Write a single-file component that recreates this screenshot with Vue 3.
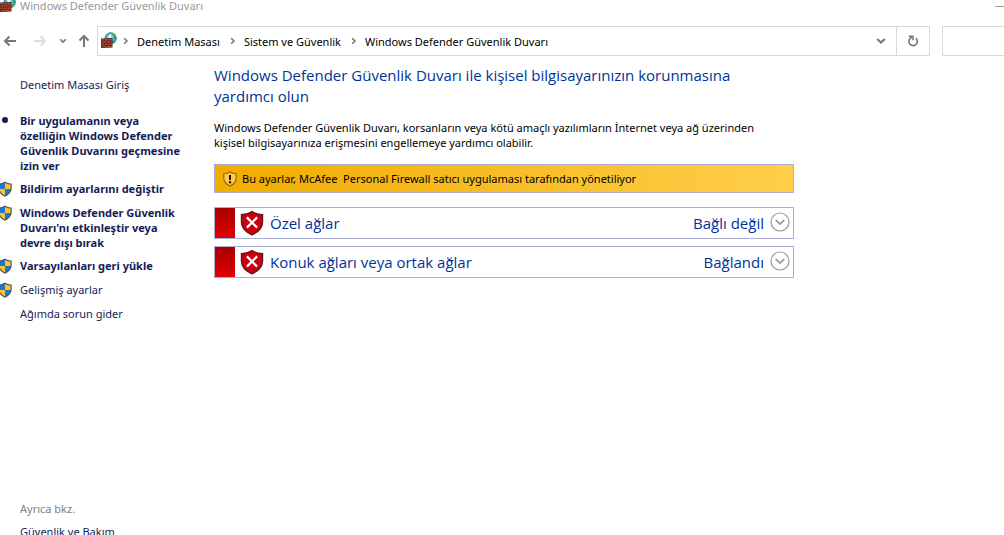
<script setup>
const tasks = [
  { text: 'Bir uygulamanın veya\nözelliğin Windows Defender\nGüvenlik Duvarını geçmesine\nizin ver', bold: true, mark: 'dot' },
  { text: 'Bildirim ayarlarını değiştir', bold: true, mark: 'shield' },
  { text: "Windows Defender Güvenlik\nDuvarı'nı etkinleştir veya\ndevre dışı bırak", bold: true, mark: 'shield' },
  { text: 'Varsayılanları geri yükle', bold: true, mark: 'shield' },
  { text: 'Gelişmiş ayarlar', bold: false, mark: 'shield' },
  { text: 'Ağımda sorun gider', bold: false, mark: '' },
]
const crumbs = ['Denetim Masası', 'Sistem ve Güvenlik', 'Windows Defender Güvenlik Duvarı']
const networks = [
  { name: 'Özel ağlar', state: 'Bağlı değil' },
  { name: 'Konuk ağları veya ortak ağlar', state: 'Bağlandı' },
]
</script>

<template>
  <svg class="defs" width="0" height="0" aria-hidden="true">
    <defs>
      <symbol id="firewall" viewBox="0 0 16 16">
        <circle cx="9.7" cy="6.2" r="6" fill="#2a6fe0" />
        <circle cx="9.2" cy="5.4" r="3.800" fill="#7cc4fa" />
        <path d="M11.200.9c1.600.4 2.700 1.200 3.500 2.500l-.5 1.800-1.800-.2-1.400-1.900zM12.500 7l2.900-.2c-.1 1.900-.9 3.300-2.200 4.300l-1.500-1.700z" fill="#3fbf35" />
        <path d="M4.500 4.300C5.300 2.300 6.800.9 8.700.6L8.300 2.600 6.200 4.700z" fill="#4dc050" />
        <path d="M8.600 2.300c1 0 1.800.6 2 1.600l-.7 2.200-2 .2-.7-1.700z" fill="#e3f7ff" />
        <path d="M0 6.500 11.500 6v9.500L0 16z" fill="#5d2119" />
        <g fill="#ac4a38">
          <path d="M.5 7H3v1.600H.5zM3.800 7h3v1.600h-3zM7.600 7H11v1.600H7.600zM.5 9.300h1v1.500h-1zM2.200 9.300h3v1.500h-3zM6 9.300h3v1.500H6zM9.700 9.300H11v1.500H9.700zM.5 11.500H3V13H.5zM3.800 11.500h3V13h-3zM7.600 11.500H11V13H7.600zM.5 13.700h1v1.600h-1zM2.200 13.700h3v1.600h-3zM6 13.700h3v1.500H6zM9.700 13.700H11V15H9.700z" />
        </g>
      </symbol>
      <symbol id="uac" viewBox="0 0 16 16">
        <path d="M8 .4C5.800 1.900 3.600 2.400 1.300 2.400V7c0 4 2.700 6.900 6.700 8.700 4-1.800 6.700-4.700 6.700-8.700V2.400C12.400 2.400 10.200 1.900 8 .4z" fill="#4a4f55" />
        <path d="M8 1.700C6.300 2.800 4.400 3.400 2.400 3.500V8H8z" fill="#1e78d0" />
        <path d="M8 1.700c1.700 1.100 3.600 1.700 5.600 1.800V8H8z" fill="#fdc22e" />
        <path d="M2.400 8H8v6.500C5 13 2.700 10.900 2.400 8z" fill="#fdc22e" />
        <path d="M13.600 8H8v6.500c3-1.500 5.300-3.600 5.600-6.500z" fill="#1e78d0" />
      </symbol>
    </defs>
  </svg>

  <div class="window">
    <header class="titlebar">
      <svg class="app-icon" width="16" height="16" aria-hidden="true"><use href="#firewall" /></svg>
      <span class="title">Windows Defender Güvenlik Duvarı</span>
      <button class="minimize" aria-label="Simge durumuna küçült"></button>
    </header>

    <nav class="navbar" aria-label="Gezinti">
      <button class="nav back" aria-label="Geri">
        <svg width="14" height="12" viewBox="0 0 14 12"><path d="M13 6H2M6.500 1.500 2 6l4.500 4.500" /></svg>
      </button>
      <button class="nav forward" aria-label="İleri" disabled>
        <svg width="14" height="12" viewBox="0 0 14 12"><path d="M1 6h11M7.500 1.500 12 6l-4.500 4.500" /></svg>
      </button>
      <button class="nav recent" aria-label="Son konumlar">
        <svg width="8" height="6" viewBox="0 0 8 6"><path d="m1.200 1.300 2.800 2.800 2.800-2.800" /></svg>
      </button>
      <button class="nav up" aria-label="Yukarı">
        <svg width="12" height="14" viewBox="0 0 12 14"><path d="M6 13V2M1.500 6.500 6 2l4.500 4.500" /></svg>
      </button>

      <div class="address">
        <svg class="address-icon" width="16" height="16" aria-hidden="true"><use href="#firewall" /></svg>
        <template v-for="crumb in crumbs" :key="crumb">
          <svg class="sep" width="6" height="8" viewBox="0 0 6 8" aria-hidden="true"><path d="m1.200 1.200 2.800 2.800-2.800 2.800" /></svg>
          <a href="#" class="crumb">{{ crumb }}</a>
        </template>
        <button class="drop" aria-label="Önceki konumlar">
          <svg width="10" height="8" viewBox="0 0 10 8"><path d="m1.200 2 3.800 3.600L8.800 2" /></svg>
        </button>
        <button class="refresh" aria-label="Yenile">
          <svg width="12" height="12" viewBox="0 0 12 12"><path d="M8.800 3.200A4.200 4.200 0 1 1 3.200 3.400L5.300 1.500" /><path d="M1.800 1.300H6v4" /></svg>
        </button>
      </div>
      <input class="search" type="search" aria-label="Ara" />
    </nav>

    <div class="body">
      <aside class="sidebar">
        <a href="#" class="link home">Denetim Masası Giriş</a>
        <ul class="tasks">
          <li v-for="task in tasks" :key="task.text" class="task">
            <span class="mark">
              <svg v-if="task.mark === 'shield'" width="16" height="16" aria-hidden="true"><use href="#uac" /></svg>
              <i v-else-if="task.mark === 'dot'" class="dot"></i>
            </span>
            <a href="#" class="link" :class="{ bold: task.bold }">{{ task.text }}</a>
          </li>
        </ul>
        <h2 class="see-also">Ayrıca bkz.</h2>
        <a href="#" class="link">Güvenlik ve Bakım</a>
      </aside>

      <main class="content">
        <h1>Windows Defender Güvenlik Duvarı ile kişisel bilgisayarınızın korunmasına yardımcı olun</h1>
        <p class="intro">
          Windows Defender Güvenlik Duvarı, korsanların veya kötü amaçlı yazılımların İnternet veya ağ üzerinden
          kişisel bilgisayarınıza erişmesini engellemeye yardımcı olabilir.
        </p>

        <div class="notice" role="status">
          <svg width="16" height="16" viewBox="0 0 16 16" aria-hidden="true">
            <path d="M8 1C6 2.200 4 2.700 1.800 2.700V7c0 3.700 2.500 6.400 6.200 8 3.700-1.600 6.200-4.300 6.200-8V2.700C12 2.700 10 2.200 8 1z" fill="#ffc94a" stroke="#8a6414" stroke-width="1.100" />
            <path d="M8 4v5" stroke="#1c1600" stroke-width="2" />
            <circle cx="8" cy="11.200" r="1.200" fill="#1c1600" />
          </svg>
          <span>Bu ayarlar, McAfee&nbsp; Personal Firewall satıcı uygulaması tarafından yönetiliyor</span>
        </div>

        <section v-for="net in networks" :key="net.name" class="network">
          <span class="stripe"></span>
          <svg class="alert" width="24" height="26" viewBox="0 0 24 26" aria-hidden="true">
            <path d="M12 1.500C8.800 3.700 5.200 4.700 1.500 4.700V12c0 6 4.200 10 10.500 12.800C18.300 22 22.500 18 22.500 12V4.700C18.800 4.700 15.200 3.700 12 1.500z" fill="#c8000f" stroke="#6b1218" stroke-width="1.400" />
            <path d="m6.900 7.400 10.200 10.200M17.100 7.400 6.900 17.600" stroke="#fff" stroke-width="2.200" />
          </svg>
          <h3>{{ net.name }}</h3>
          <span class="state">{{ net.state }}</span>
          <button class="expand" :aria-label="net.name + ' ayrıntıları'">
            <svg width="20" height="20" viewBox="0 0 20 20"><circle cx="10" cy="10" r="9" /><path d="m5.800 8.200 4.200 4 4.200-4" /></svg>
          </button>
        </section>
      </main>
    </div>
  </div>
</template>

<style>
body {
  margin: 0;
  background: #fff;
  overflow: hidden;
}
</style>

<style scoped>
.defs {
  position: absolute;
}
.window {
  height: 100vh;
  overflow: hidden;
  font: 11px/15px "Noto Sans", "Open Sans", sans-serif;
  color: #000;
}
button {
  display: flex;
  align-items: center;
  justify-content: center;
  padding: 0;
  border: 0;
  background: none;
}
a {
  color: inherit;
  text-decoration: none;
}
svg {
  display: block;
  flex: none;
}
.titlebar {
  display: flex;
  align-items: center;
  height: 12px;
  color: #999;
}
.app-icon {
  margin-bottom: 4px;
}
.title {
  margin-left: 4px;
  line-height: 12px;
}
.minimize {
  width: 9px;
  height: 1px;
  margin-left: auto;
  background: #999;
}
.navbar {
  display: flex;
  align-items: center;
  margin-top: 14px;
}
.nav path,
.drop path,
.refresh path {
  fill: none;
  stroke: #777;
  stroke-width: 2;
}
.nav {
  height: 28px;
}
.back {
  margin-left: 3px;
}
.forward {
  margin-left: 16px;
}
.forward path {
  stroke: #dedede;
}
.recent {
  margin-left: 12px;
}
.recent path {
  stroke-width: 1.6;
}
.up {
  margin: 0 7px 0 11px;
}
.address {
  display: flex;
  align-items: center;
  flex: 1;
  height: 28px;
  border: 1px solid #d9d9d9;
}
.address-icon {
  margin: 0 6px 2px 3px;
}
.sep path {
  fill: none;
  stroke: #777;
  stroke-width: 1.6;
}
.crumb {
  margin: 0 10px 0 8px;
}
.drop {
  width: 30px;
  height: 28px;
  margin-left: auto;
}
.refresh {
  width: 33px;
  height: 28px;
  border-left: 1px solid #d9d9d9;
}
.refresh path {
  stroke-width: 1.6;
}
.search {
  box-sizing: border-box;
  width: 62px;
  height: 30px;
  margin-left: 12px;
  border: 1px solid #d9d9d9;
  border-right: 0;
  border-radius: 0;
  background: #fff;
}
.body {
  display: flex;
}
.sidebar {
  flex: none;
  width: 214px;
  padding-top: 21px;
  color: #151c55;
}
.sidebar > .link,
.see-also {
  display: block;
  margin: 0 0 7px 20px;
  line-height: 16px;
}
.sidebar > .home {
  margin-bottom: 20px;
}
.tasks {
  display: flex;
  flex-direction: column;
  gap: 8px;
  margin: 0;
  padding: 0;
  list-style: none;
}
.task {
  display: flex;
  min-height: 16px;
}
.task .link {
  white-space: pre;
}
.bold {
  font-weight: 700;
}
.mark {
  width: 23px;
  margin-left: -3px;
}
.dot {
  display: block;
  width: 6px;
  height: 6px;
  margin: 4px 0 0 5px;
  border-radius: 50%;
  background: #151c55;
}
.see-also {
  margin-top: 179px;
  font-size: 11px;
  font-weight: 400;
  color: #808080;
}
.content {
  flex: 0 1 580px;
  min-width: 0;
  padding-top: 9px;
}
h1 {
  margin: 0 0 13px;
  padding-right: 20px;
  font: 400 15px/21px "Open Sans", "Noto Sans", sans-serif;
  color: #003399;
}
.intro {
  margin: 0 0 14px;
  padding-right: 20px;
}
.notice {
  display: flex;
  align-items: center;
  gap: 4px;
  height: 27px;
  margin-bottom: 14px;
  padding-left: 7px;
  border: 1px solid #a9aed2;
  background: linear-gradient(90deg, #f0ad00, #ffce4b);
}
.network {
  display: flex;
  align-items: center;
  height: 30px;
  margin-bottom: 7px;
  border: 1px solid #a9aed2;
  color: #003399;
  font: 15px/20px "Open Sans", "Noto Sans", sans-serif;
}
.stripe {
  align-self: stretch;
  width: 20px;
  background: linear-gradient(#a80000, #e10000);
}
.alert {
  margin: 0 6px 0 5px;
}
h3 {
  margin: 0;
  font: inherit;
}
.state {
  margin-left: auto;
}
.expand {
  margin: 0 3px 2px 6px;
}
.expand circle,
.expand path {
  fill: none;
  stroke: #999;
  stroke-width: 1.2;
}
.expand path {
  stroke-width: 1.7;
}
</style>
